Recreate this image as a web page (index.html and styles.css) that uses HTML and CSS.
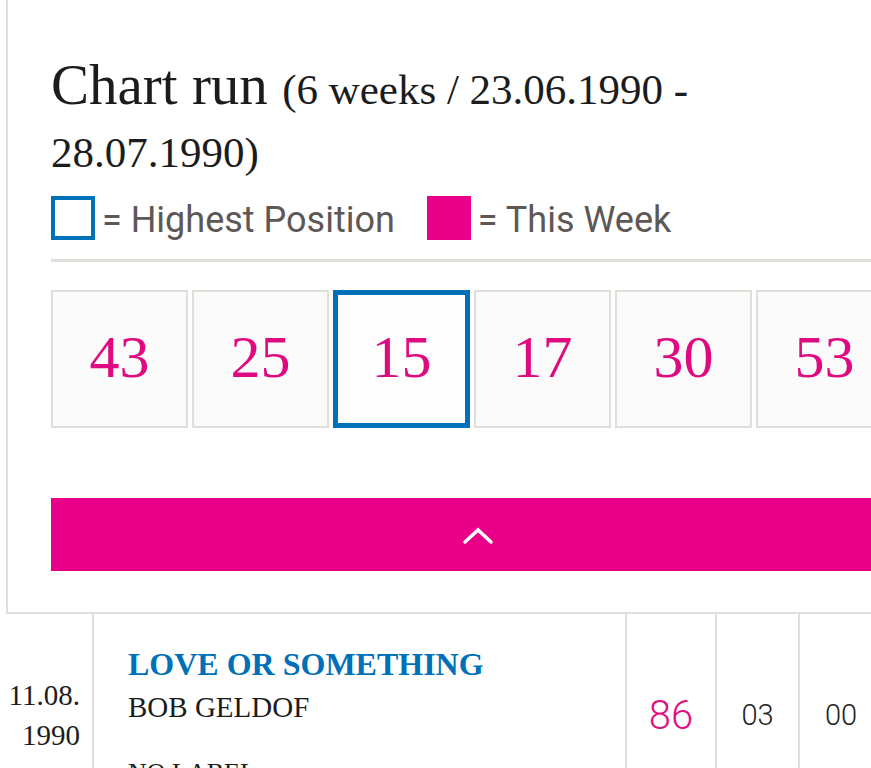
FILE: index.html
```html
<!DOCTYPE html>
<html lang="en">
<head>
<meta charset="utf-8">
<title>Chart run</title>
<link rel="stylesheet" href="styles.css">
</head>
<body>
<section class="card">
  <h2 class="run-title">Chart run <span class="run-range">(6 weeks / 23.06.1990 - 28.07.1990)</span></h2>
  <div class="legend">
    <span class="legend-box legend-box--high"></span>
    <span class="legend-text">= Highest Position</span>
    <span class="legend-box legend-box--week"></span>
    <span class="legend-text">= This Week</span>
  </div>
  <hr class="divider">
  <div class="weeks">
    <div class="week">43</div>
    <div class="week">25</div>
    <div class="week week--high">15</div>
    <div class="week">17</div>
    <div class="week">30</div>
    <div class="week">53</div>
  </div>
  <button class="collapse" type="button" aria-label="Collapse">
    <svg width="32" height="18" viewBox="0 0 32 18"><polyline points="3,15 16,3 29,15" fill="none" stroke="#fff" stroke-width="3.5" stroke-linecap="round" stroke-linejoin="miter"/></svg>
  </button>
</section>
<div class="row">
  <div class="cell cell-date">11.08.<br>1990</div>
  <div class="cell cell-info">
    <div class="song">LOVE OR SOMETHING</div>
    <div class="artist">BOB GELDOF</div>
    <div class="label">NO LABEL</div>
  </div>
  <div class="cell cell-pos">86</div>
  <div class="cell cell-num">03</div>
  <div class="cell cell-num cell-last">00</div>
</div>
</body>
</html>
```

FILE: styles.css
```css
html, body {
  margin: 0;
  padding: 0;
  background: #ffffff;
  overflow: hidden;
}

body {
  width: 1000px;
  font-family: "Liberation Serif", "Times New Roman", serif;
  color: #1c1c1c;
}

.card {
  margin-left: 6px;
  width: 854px;
  padding: 53px 43px 41px 43px;
  border: 2px solid #e0ded9;
  border-top: none;
}

.run-title {
  margin: 0;
  font-weight: 400;
  font-size: 57px;
  line-height: 63px;
  width: 700px;
  color: #1c1c1c;
}

.run-range {
  font-size: 43px;
  line-height: 40px;
}

.legend {
  display: flex;
  align-items: center;
  margin-top: 17px;
  height: 44px;
}

.legend-box {
  box-sizing: border-box;
  width: 44px;
  height: 44px;
  flex: none;
}

.legend-box--high {
  border: 4px solid #0071b9;
}

.legend-box--week {
  background: #ea0088;
  margin-left: 32px;
}

.legend-text {
  font-family: Roboto, "Liberation Sans", sans-serif;
  font-size: 36px;
  color: #5d5756;
  margin-left: 7px;
  padding-top: 3px;
}

.divider {
  margin: 19px 0 0 0;
  border: none;
  height: 3px;
  background: #e0ded9;
}

.weeks {
  display: flex;
  gap: 4px;
  margin-top: 28px;
}

.week {
  box-sizing: border-box;
  flex: none;
  width: 137px;
  height: 138px;
  border: 2px solid #e0ded9;
  background: #fbfbfb;
  display: flex;
  align-items: center;
  justify-content: center;
  font-size: 60px;
  color: #df0a80;
  padding-bottom: 4px;
}

.week--high {
  border: 5px solid #0070b8;
  background: #fdfdfd;
}

.collapse {
  display: flex;
  align-items: center;
  justify-content: center;
  width: 100%;
  height: 73px;
  margin-top: 70px;
  border: none;
  padding: 0;
  background: #ea0088;
  cursor: pointer;
}

.collapse svg {
  display: block;
  margin-top: 2px;
}

.row {
  display: flex;
  height: 202px;
}

.cell {
  border-left: 2px solid #e0ded9;
  display: flex;
  align-items: center;
  justify-content: center;
}

.cell-date {
  border-left: none;
  box-sizing: border-box;
  width: 92px;
  justify-content: flex-end;
  text-align: right;
  padding-right: 12px;
  font-size: 29px;
  line-height: 40px;
  color: #1c1c1c;
  padding-top: 0;
}

.cell-info {
  box-sizing: border-box;
  width: 533px;
  display: block;
  padding: 29px 0 0 34px;
}

.song {
  font-weight: 700;
  font-size: 32px;
  line-height: 42px;
  color: #0071b9;
}

.artist {
  font-size: 29px;
  line-height: 44px;
  color: #1c1c1c;
}

.label {
  margin-top: 26px;
  font-size: 26px;
  line-height: 36px;
  color: #1c1c1c;
}

.cell-pos {
  box-sizing: border-box;
  width: 90px;
  font-family: Roboto, "Liberation Sans", sans-serif;
  font-weight: 300;
  font-size: 40px;
  color: #e0117f;
}

.cell-num {
  box-sizing: border-box;
  width: 83px;
  font-family: Roboto, "Liberation Sans", sans-serif;
  font-weight: 300;
  font-size: 29px;
  color: #222;
}

.cell-last {
  width: 84px;
}
```
